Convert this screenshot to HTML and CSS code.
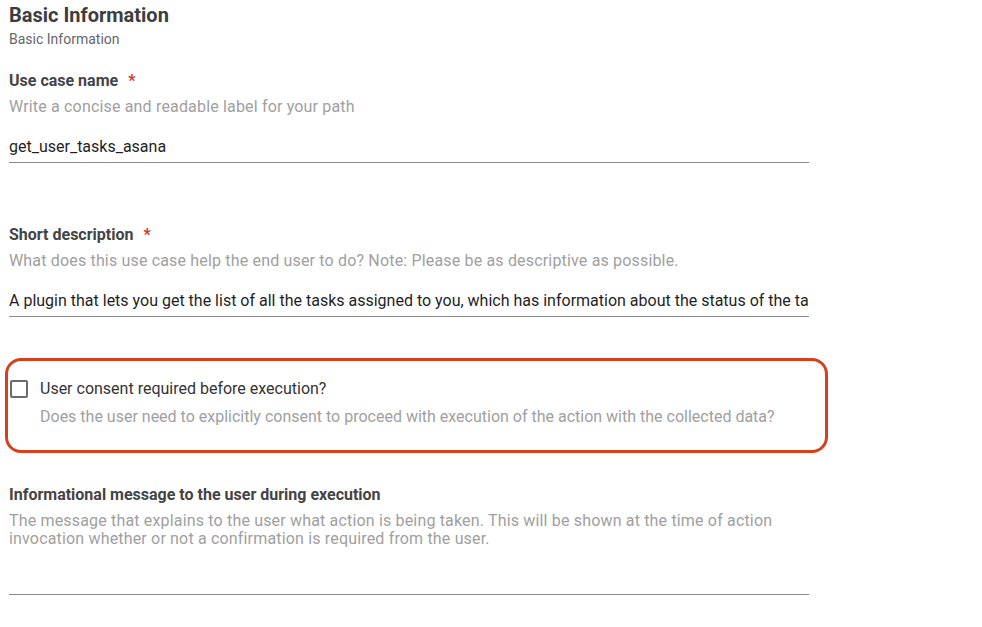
FILE: index.html
```html
<!DOCTYPE html>
<html>
<head>
<meta charset="utf-8">
<link rel="stylesheet" href="styles.css">
</head>
<body>
<div class="page">
  <h1 class="title">Basic Information</h1>
  <div class="subtitle">Basic Information</div>

  <div class="field f-name">
    <div class="label">Use case name <span class="req">*</span></div>
    <div class="helper">Write a concise and readable label for your path</div>
    <div class="input">get_user_tasks_asana</div>
  </div>

  <div class="field f-desc">
    <div class="label">Short description <span class="req">*</span></div>
    <div class="helper">What does this use case help the end user to do? Note: Please be as descriptive as possible.</div>
    <div class="input">A plugin that lets you get the list of all the tasks assigned to you, which has information about the status of the tasks and their due dates</div>
  </div>

  <div class="consent">
    <div class="check-row">
      <span class="checkbox"></span>
      <span class="check-label">User consent required before execution?</span>
    </div>
    <div class="check-helper">Does the user need to explicitly consent to proceed with execution of the action with the collected data?</div>
  </div>

  <div class="field f-info">
    <div class="label">Informational message to the user during execution</div>
    <div class="helper multi">The message that explains to the user what action is being taken. This will be shown at the time of action invocation whether or not a confirmation is required from the user.</div>
    <div class="input empty"></div>
  </div>
</div>
</body>
</html>
```
FILE: styles.css
```css
html, body {
  margin: 0;
  padding: 0;
  background: #ffffff;
}
body {
  font-family: Roboto, "Liberation Sans", sans-serif;
}
.page {
  padding: 3px 0 0 9px;
  width: 800px;
}
.title {
  margin: 0;
  font-size: 20px;
  line-height: 24px;
  font-weight: 700;
  color: #3d3d3d;
}
.subtitle {
  margin-top: 3px;
  font-size: 14px;
  line-height: 18px;
  color: #666666;
}
.field .label {
  font-size: 16px;
  line-height: 20px;
  font-weight: 700;
  color: #444444;
}
.req {
  color: #d0342c;
  margin-left: 6px;
}
.field .helper {
  margin-top: 6px;
  font-size: 16px;
  line-height: 20px;
  letter-spacing: 0.17px;
  color: #a0a0a0;
}
.field .helper.multi {
  margin-top: 7px;
  line-height: 18px;
}
.field .input {
  margin-top: 20px;
  font-size: 16px;
  line-height: 20px;
  color: #1f1f1f;
  padding-bottom: 5px;
  border-bottom: 1px solid #8a8a8a;
  white-space: nowrap;
  overflow: hidden;
}
.field .input.empty {
  height: 20px;
  margin-top: 20px;
  padding-bottom: 6px;
}
.f-name {
  margin-top: 23px;
}
.f-desc {
  margin-top: 62px;
}
.consent {
  margin: 41px 0 0 -4px;
  width: 815px;
  border: 3px solid #d3411e;
  border-radius: 16px;
  padding: 18px 0 23px 2px;
}
.check-row {
  display: flex;
  align-items: center;
  gap: 12px;
  height: 20px;
}
.checkbox {
  width: 14px;
  height: 14px;
  border: 2px solid #6b6b6b;
  border-radius: 2px;
  flex: none;
}
.check-label {
  font-size: 16px;
  line-height: 20px;
  color: #333333;
}
.check-helper {
  margin: 8px 0 0 30px;
  font-size: 16px;
  line-height: 20px;
  color: #a0a0a0;
}
.f-info {
  margin-top: 32px;
}
```
